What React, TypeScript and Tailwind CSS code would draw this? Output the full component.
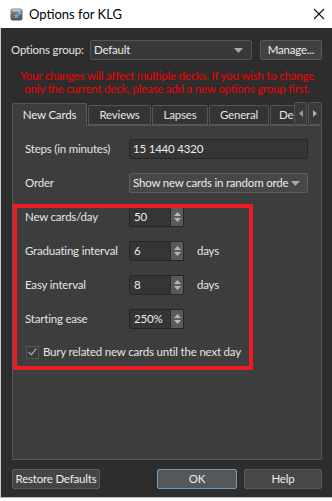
import React from "react";

const font = { fontFamily: "Lato, 'Noto Sans', sans-serif" };

function SpinArrows() {
  return (
    <div className="w-[13px] h-full bg-[#5a5a5a] border-l border-[#2a2a2a] flex flex-col items-center justify-center gap-[2px]">
      <svg width="7" height="4" viewBox="0 0 7 4"><path d="M0 4 L3.5 0 L7 4 Z" fill="#b8b8b8" /></svg>
      <svg width="7" height="4" viewBox="0 0 7 4"><path d="M0 0 L3.5 4 L7 0 Z" fill="#b8b8b8" /></svg>
    </div>
  );
}

function Spin({ value, suffix }: { value: string; suffix?: string }) {
  return (
    <div className="flex items-center h-[20px]">
      <div className="w-[55px] h-[20px] rounded-[2px] border border-[#262626] bg-[#353535] flex items-stretch overflow-hidden">
        <div className="flex-1 pl-[4px] flex items-center text-[#ececec]">{value}</div>
        <SpinArrows />
      </div>
      {suffix && <span className="ml-[13px] text-[#e4e4e4]">{suffix}</span>}
    </div>
  );
}

function Row({ label, children }: { label: string; children: React.ReactNode }) {
  return (
    <div className="flex items-center h-[20px]">
      <div className="w-[104px] text-[#e4e4e4]">{label}</div>
      {children}
    </div>
  );
}

function DownArrow() {
  return (
    <svg width="9" height="5" viewBox="0 0 9 5"><path d="M0 0 L4.5 5 L9 0 Z" fill="#a8a8a8" /></svg>
  );
}

export default function App() {
  return (
    <div className="w-[332px] h-[501px] flex flex-col bg-white text-[11.5px] tracking-[-0.2px] leading-[14px] whitespace-nowrap overflow-hidden" style={font}>
      {/* title bar */}
      <div className="h-[28px] flex items-center bg-white shrink-0">
        <div className="ml-[10px] w-[13px] h-[13px]">
          <svg width="13" height="13" viewBox="0 0 13 13">
            <defs>
              <linearGradient id="g" x1="0" y1="0" x2="0" y2="1">
                <stop offset="0" stopColor="#8a8f96" />
                <stop offset="1" stopColor="#4c5057" />
              </linearGradient>
            </defs>
            <rect x="0.5" y="0.5" width="12" height="12" rx="2.5" fill="url(#g)" />
            <rect x="2" y="1.5" width="9" height="2" rx="1" fill="#c9ccd0" />
            <path d="M6.5 5 L7.3 7 L9.4 7.1 L7.8 8.4 L8.3 10.5 L6.5 9.3 L4.7 10.5 L5.2 8.4 L3.6 7.1 L5.7 7 Z" fill="#5ab0ee" />
            <path d="M9.5 3.5 L10 4.6 L11.1 4.7 L10.3 5.4 L10.5 6.5 L9.5 5.9 L8.5 6.5 L8.7 5.4 L7.9 4.7 L9 4.6 Z" fill="#8fd0ff" />
          </svg>
        </div>
        <span className="ml-[6px] text-[13px] tracking-normal text-black">Options for KLG</span>
        <div className="ml-auto mr-[7px] w-[12px] h-[12px]">
          <svg width="12" height="12" viewBox="0 0 12 12">
            <path d="M1 1 L11 11 M11 1 L1 11" stroke="#111" strokeWidth="1.1" />
          </svg>
        </div>
      </div>

      {/* dark body */}
      <div className="h-[469px] shrink-0 bg-[#2d2d2e] border-l border-[#c9c9c9] flex flex-col pl-[11px] pr-[10px]">
        <div className="mt-[12px] flex items-center h-[20px]">
          <span className="text-[#e4e4e4] w-[79px] -ml-[1px]">Options group:</span>
          <div className="w-[162px] h-[20px] rounded-[2px] border border-[#555] bg-[#383838] flex items-center pl-[3px] pr-[8px] text-[#ececec]">
            <span className="flex-1">Default</span>
            <DownArrow />
          </div>
          <div className="ml-[8px] w-[62px] h-[20px] rounded-[2px] border border-[#585858] bg-[#414141] flex items-center justify-center text-[#ececec]">
            Manage...
          </div>
        </div>

        <div className="mt-[9px] flex flex-col items-center text-[#f00000] leading-[13px]">
          <span>Your changes will affect multiple decks. If you wish to change</span>
          <span>only the current deck, please add a new options group first.</span>
        </div>

        {/* tabs */}
        <div className="mt-[7px] flex items-end h-[23px]">
          <div className="w-[75px] h-[23px] bg-[#3d3d3d] border border-b-0 border-[#585858] rounded-t-[2px] flex items-center justify-center text-[#ececec] relative z-10 -mb-[1px] pb-[1px]">New Cards</div>
          <div className="ml-[1px] w-[63px] h-[20px] bg-[#343434] border border-[#555] rounded-t-[2px] flex items-center justify-center text-[#e4e4e4]">Reviews</div>
          <div className="ml-[1px] w-[56px] h-[20px] bg-[#343434] border border-[#555] rounded-t-[2px] flex items-center justify-center text-[#e4e4e4]">Lapses</div>
          <div className="ml-[1px] w-[60px] h-[20px] bg-[#343434] border border-[#555] rounded-t-[2px] flex items-center justify-center text-[#e4e4e4]">General</div>
          <div className="ml-[1px] w-[24px] h-[20px] bg-[#343434] border border-r-0 border-[#555] rounded-tl-[2px] flex items-center pl-[8px] text-[#e4e4e4] overflow-hidden">De</div>
          <div className="self-start w-[13px] h-[23px] bg-[#3a3a3a] border border-[#555] rounded-[2px] flex items-center justify-center">
            <svg width="4" height="7" viewBox="0 0 4 7"><path d="M4 0 L0 3.5 L4 7 Z" fill="#9a9a9a" /></svg>
          </div>
          <div className="self-start ml-[1px] w-[14px] h-[23px] bg-[#3a3a3a] border border-[#555] rounded-[2px] flex items-center justify-center">
            <svg width="4" height="7" viewBox="0 0 4 7"><path d="M0 0 L4 3.5 L0 7 Z" fill="#b0b0b0" /></svg>
          </div>
        </div>

        {/* panel */}
        <div className="relative h-[335px] shrink-0 bg-[#3d3d3d] border border-[#585858] pl-[12px] pt-[13px] flex flex-col gap-[14px]">
          <Row label="Steps (in minutes)">
            <div className="w-[179px] h-[20px] rounded-[2px] border border-[#262626] bg-[#353535] flex items-center pl-[3px] text-[#ececec]">15 1440 4320</div>
          </Row>
          <Row label="Order">
            <div className="w-[179px] h-[20px] rounded-[2px] border border-[#5c5c5c] bg-[#474747] flex items-center pl-[3px] pr-[7px] text-[#ececec] overflow-hidden">
              <span className="flex-1 overflow-hidden">Show new cards in random orde</span>
              <DownArrow />
            </div>
          </Row>
          <Row label="New cards/day"><Spin value="50" /></Row>
          <Row label="Graduating interval"><Spin value="6" suffix="days" /></Row>
          <Row label="Easy interval"><Spin value="8" suffix="days" /></Row>
          <Row label="Starting ease"><Spin value="250%" /></Row>
          <div className="flex items-center h-[20px] -mt-[1px]">
            <div className="w-[13px] h-[13px] ml-[1px] border border-[#555] bg-[#3a3a3a] flex items-center justify-center">
              <svg width="9" height="8" viewBox="0 0 9 8"><path d="M0.8 4.2 L3.3 6.8 L8.2 0.6" stroke="#a0a0a0" strokeWidth="1.4" fill="none" /></svg>
            </div>
            <span className="ml-[4px] text-[#e4e4e4]">Bury related new cards until the next day</span>
          </div>
          <div className="absolute left-[0px] top-[78px] w-[240px] h-[166px] border-[4px] border-[#ed1c24]" />
        </div>

        {/* buttons */}
        <div className="mt-[9px] flex items-center h-[20px]">
          <div className="w-[88px] h-[20px] rounded-[2px] border border-[#5a5a5a] bg-[#444] flex items-center justify-center text-[#ececec]">Restore Defaults</div>
          <div className="ml-[57px] w-[80px] h-[20px] rounded-[2px] border border-[#6d9bbd] bg-[#555759] flex items-center justify-center text-[#ececec]">OK</div>
          <div className="ml-[7px] w-[78px] h-[20px] rounded-[2px] border border-[#5a5a5a] bg-[#474747] flex items-center justify-center text-[#ececec]">Help</div>
        </div>
      </div>
      <div className="h-[4px] bg-white shrink-0 border-t border-[#bbb]" />
    </div>
  );
}
